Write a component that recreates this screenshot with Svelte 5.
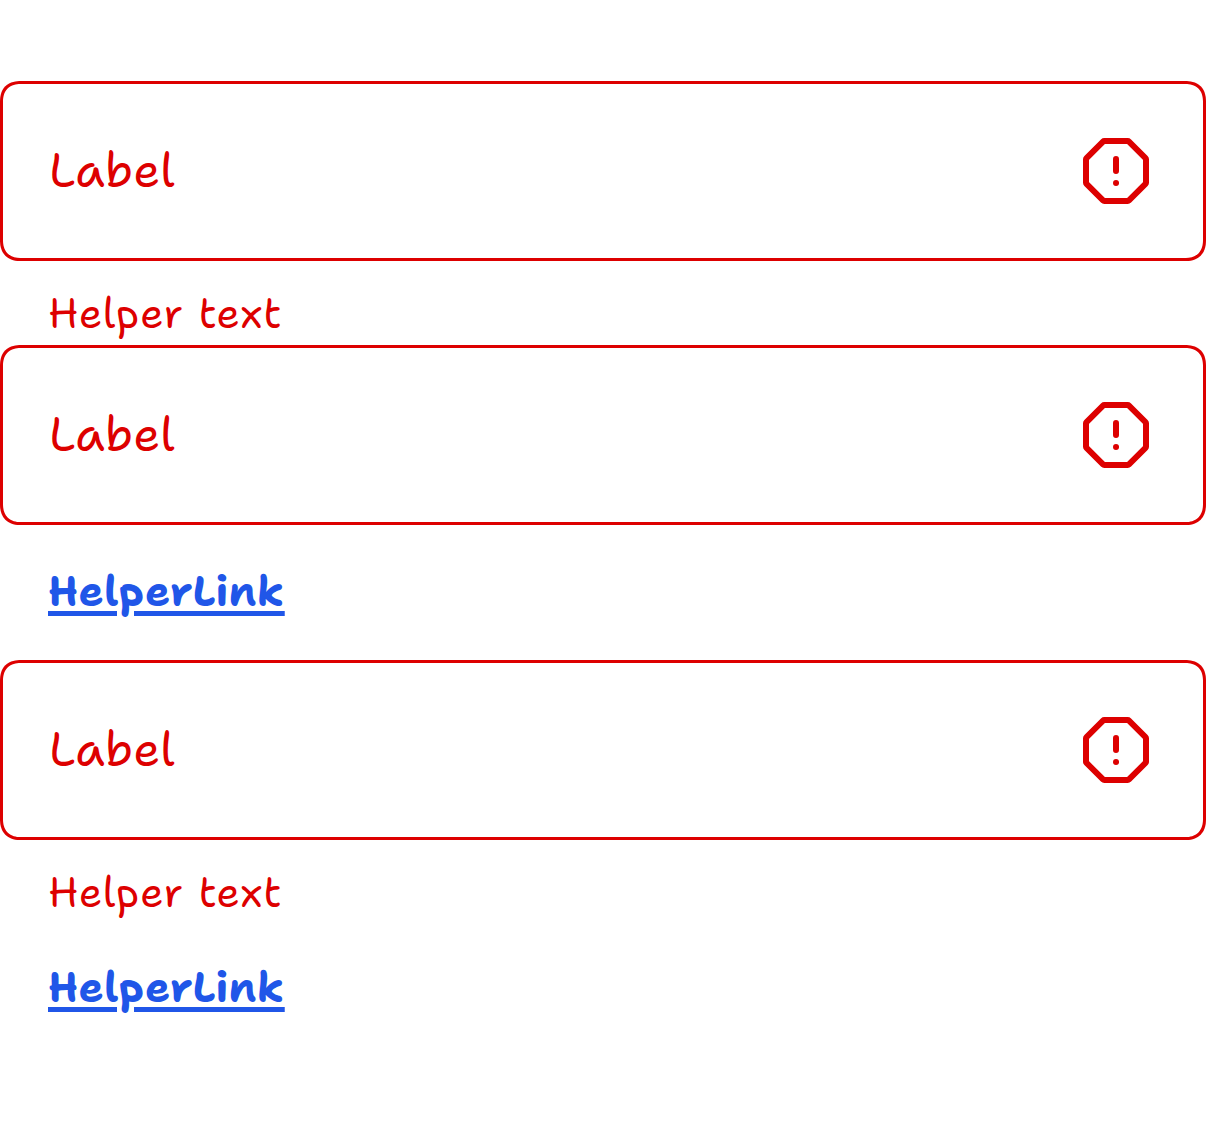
<script lang="ts">
  type Field = { label: string; helper?: string; link?: string };
  const fields: Field[] = [
    { label: 'Label', helper: 'Helper text' },
    { label: 'Label', link: 'HelperLink' },
    { label: 'Label', helper: 'Helper text', link: 'HelperLink' }
  ];
</script>

<main>
  {#each fields as field}
    <section>
      <div class="box">
        <span class="label">{field.label}</span>
        <svg class="icon" viewBox="0 0 24 24" aria-hidden="true">
          <path d="M8.1 2h7.8q.25 0 .42.17l5.51 5.51q.17.17.17.42v7.8q0 .25-.17.42l-5.51 5.51q-.17.17-.42.17H8.1q-.25 0-.42-.17l-5.51-5.51Q2 16.15 2 15.9V8.1q0-.25.17-.42l5.51-5.51Q7.85 2 8.1 2z" />
          <path d="M12 8v4M12 16h.01" />
        </svg>
      </div>
      <div class="support" class:linked={field.link}>
        {#if field.helper}<div class="helper">{field.helper}</div>{/if}
        {#if field.link}<a class="link" class:after={field.helper} href="#helper">{field.link}</a>{/if}
      </div>
    </section>
  {/each}
</main>

<style>
  :global(body) {
    margin: 0;
    background: #fff;
  }
  main {
    box-sizing: border-box;
    min-height: 1134px;
    padding-top: 81px;
    color: #d00;
    font-family: 'Shantell Sans', Lato, sans-serif;
  }
  .box {
    box-sizing: border-box;
    height: 180px;
    display: flex;
    align-items: center;
    justify-content: space-between;
    padding: 0 51px 0 46px;
    border: 3px solid #d00;
    border-radius: 21px;
    corner-shape: superellipse(1.25);
  }
  .label {
    padding-bottom: 2px;
    font-size: 48px;
    font-weight: 400;
    line-height: 72px;
    letter-spacing: 0.2px;
  }
  .icon {
    width: 72px;
    height: 72px;
    fill: none;
    stroke: #d00;
    stroke-width: 2;
    stroke-linecap: round;
    stroke-linejoin: round;
  }
  .support {
    display: flex;
    flex-direction: column;
    align-items: flex-start;
    padding: 22px 48px 2px;
  }
  .support.linked {
    padding-bottom: 39px;
  }
  .helper {
    font-size: 42px;
    font-weight: 400;
    line-height: 60px;
    letter-spacing: 0.5px;
  }
  .link {
    margin-top: 14px;
    color: #2056e8;
    font-size: 42px;
    font-weight: 700;
    line-height: 60px;
    letter-spacing: 0.5px;
    text-decoration: underline;
    text-decoration-thickness: 5px;
    text-underline-offset: 5px;
  }
  .link.after {
    margin-top: 35px;
  }
</style>
